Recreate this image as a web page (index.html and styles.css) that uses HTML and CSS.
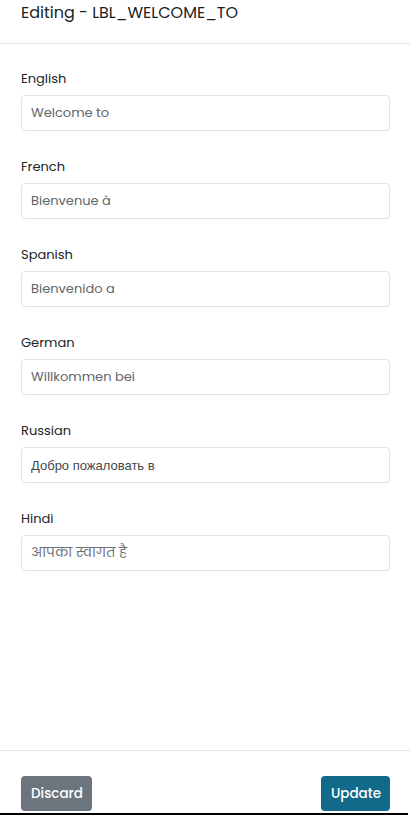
FILE: index.html
```html
<!DOCTYPE html>
<html lang="en">
<head>
<meta charset="utf-8">
<title>Editing - LBL_WELCOME_TO</title>
<link rel="stylesheet" href="styles.css">
</head>
<body>
<div class="modal">
  <header class="modal-header">
    <h1 class="modal-title">Editing - LBL_WELCOME_TO</h1>
  </header>
  <main class="modal-body">
    <div class="field">
      <label class="field-label">English</label>
      <input class="field-input" type="text" value="Welcome to">
    </div>
    <div class="field">
      <label class="field-label">French</label>
      <input class="field-input" type="text" value="Bienvenue à">
    </div>
    <div class="field">
      <label class="field-label">Spanish</label>
      <input class="field-input" type="text" value="Bienvenido a">
    </div>
    <div class="field">
      <label class="field-label">German</label>
      <input class="field-input" type="text" value="Willkommen bei">
    </div>
    <div class="field">
      <label class="field-label">Russian</label>
      <input class="field-input field-input-cyr" type="text" value="Добро пожаловать в">
    </div>
    <div class="field">
      <label class="field-label">Hindi</label>
      <input class="field-input field-input-hi" type="text" value="आपका स्वागत है">
    </div>
  </main>
  <footer class="modal-footer">
    <button class="btn btn-secondary" type="button">Discard</button>
    <button class="btn btn-primary" type="button">Update</button>
  </footer>
  <div class="edge"></div>
</div>
</body>
</html>
```

FILE: styles.css
```css
* { box-sizing: border-box; }
html, body { margin: 0; padding: 0; background: #fff; }
body {
  font-family: "Poppins", "Inter", "Liberation Sans", sans-serif;
  color: #212529;
  width: 410px;
  height: 815px;
  overflow: hidden;
}
.modal {
  display: flex;
  flex-direction: column;
  height: 815px;
}
.modal-header {
  height: 44px;
  border-bottom: 1px solid #e3e5e8;
  padding: 3px 20px 0 21px;
}
.modal-title {
  margin: 0;
  font-size: 16px;
  font-weight: 400;
  line-height: 20px;
  color: #1c1f23;
}
.modal-body {
  flex: 1;
  padding: 25px 20px 0 21px;
  display: flex;
  flex-direction: column;
  gap: 26px;
}
.field {
  display: flex;
  flex-direction: column;
  gap: 7px;
}
.field-label {
  font-size: 13px;
  line-height: 19px;
  color: #212529;
}
.field-input {
  height: 36px;
  width: 100%;
  border: 1px solid #dfe2e6;
  border-radius: 4px;
  padding: 0 9px;
  font-family: inherit;
  font-size: 13px;
  color: #5f656b;
  background: #fff;
  outline: none;
}
.field-input-cyr {
  font-family: "Liberation Sans", Arial, sans-serif;
  font-size: 13px;
  color: #43484d;
}
.field-input-hi {
  font-family: "Poppins", "Noto Sans", "Noto Sans Devanagari", sans-serif;
  font-size: 13.5px;
  color: #6d7278;
}
.modal-footer {
  height: 63px;
  border-top: 1px solid #e3e5e8;
  padding: 25px 20px 0 21px;
  display: flex;
  justify-content: space-between;
  align-items: flex-start;
}
.btn {
  height: 35px;
  border: 0;
  border-radius: 4px;
  color: #fff;
  font-family: inherit;
  font-size: 13.5px;
  font-weight: 500;
  padding: 0 10px;
}
.btn-secondary { background: #6c757d; width: 71px; }
.btn-primary { background: #116a8a; width: 69px; }
.edge {
  height: 2px;
  width: 408px;
  background: #000;
}
```
